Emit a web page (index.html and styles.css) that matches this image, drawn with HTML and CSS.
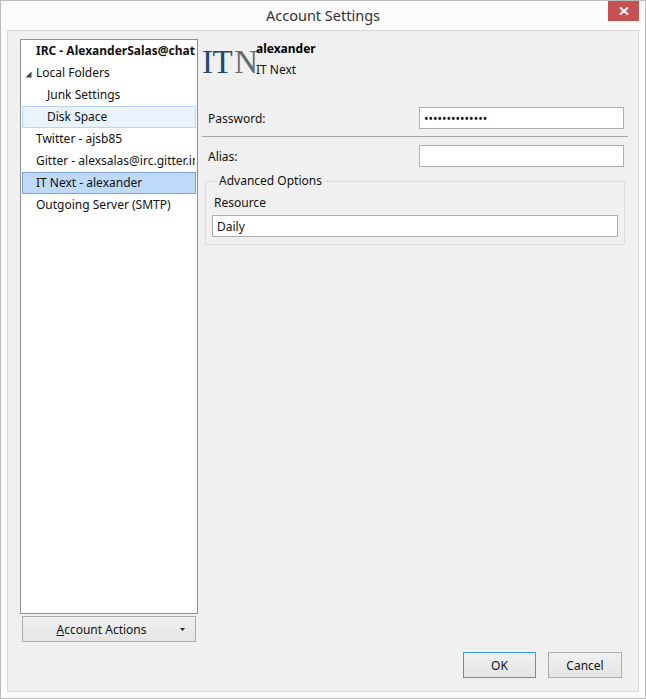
FILE: index.html
```html
<!DOCTYPE html>
<html lang="en">
<head>
<meta charset="utf-8">
<title>Account Settings</title>
<link rel="stylesheet" href="styles.css">
</head>
<body>
<div class="window">
  <header class="titlebar">
    <span></span>
    <h1 class="title">Account Settings</h1>
    <button class="close" type="button" aria-label="Close">
      <svg width="10" height="10" viewBox="0 0 10 10"><path d="M1 1.5 L9 8.5 M9 1.5 L1 8.5" stroke="#fff" stroke-width="2" fill="none"/></svg>
    </button>
  </header>
  <div class="panel">
    <div class="main">
      <aside class="sidebar">
        <ul class="tree">
          <li class="row bold">IRC - AlexanderSalas@chat...</li>
          <li class="row has-arrow"><svg class="arrow" width="7" height="7" viewBox="0 0 7 7"><path d="M6.5 0.5 V6.5 H0.5 Z" fill="#404040"/></svg>Local Folders</li>
          <li class="row child">Junk Settings</li>
          <li class="row child hover">Disk Space</li>
          <li class="row">Twitter - ajsb85</li>
          <li class="row">Gitter - alexsalas@irc.gitter.im</li>
          <li class="row selected">IT Next - alexander</li>
          <li class="row">Outgoing Server (SMTP)</li>
        </ul>
        <button class="btn actions" type="button"><span class="actions-label"><u>A</u>ccount Actions</span><svg class="caret" width="5" height="3" viewBox="0 0 5 3"><path d="M0 0 H5 L2.5 3 Z" fill="#222"/></svg></button>
      </aside>
      <section class="content">
        <div class="head">
          <div class="logo"><span class="logo-it">IT</span><span class="logo-n">N</span></div>
          <div class="head-text">
            <div class="head-name">alexander</div>
            <div class="head-sub">IT Next</div>
          </div>
        </div>
        <div class="field">
          <label class="label" for="pw">Password:</label>
          <input class="input wide" id="pw" type="password" value="aaaaaaaaaaaaaa">
        </div>
        <hr class="sep">
        <div class="field">
          <label class="label" for="alias">Alias:</label>
          <input class="input wide" id="alias" type="text">
        </div>
        <fieldset class="group">
          <legend class="legend">Advanced Options</legend>
          <label class="res-label" for="res">Resource</label>
          <input class="input full" id="res" type="text" value="Daily">
        </fieldset>
      </section>
    </div>
    <footer class="footer">
      <button class="btn default" type="button">OK</button>
      <button class="btn cancel" type="button">Cancel</button>
    </footer>
  </div>
</div>
</body>
</html>
```
FILE: styles.css
```css
* { box-sizing: border-box; }
html, body { margin: 0; padding: 0; }
body {
  width: 646px;
  height: 699px;
  font-family: "Noto Sans", "Open Sans", sans-serif;
  font-size: 12px;
  color: #111;
}
.window {
  width: 646px;
  height: 699px;
  border: 1px solid #bcbcbc;
  background: #fbfbfb;
  display: flex;
  flex-direction: column;
}
.titlebar {
  height: 29px;
  flex: none;
  display: grid;
  grid-template-columns: 1fr auto 1fr;
}
.title {
  margin: 0;
  font-size: 14.5px;
  font-weight: 400;
  line-height: 29px;
  color: #333;
}
.close {
  justify-self: end;
  width: 31px;
  height: 20px;
  margin-right: 6px;
  padding: 0;
  border: 0;
  background: #c75050;
  display: flex;
  align-items: center;
  justify-content: center;
}
.panel {
  flex: 1;
  margin: 0 6px 6px;
  border: 1px solid #d8d8d8;
  background: #f0f0f0;
  display: flex;
  flex-direction: column;
}
.main {
  flex: 1;
  display: flex;
  gap: 4px;
  padding: 8px 0 0 12px;
}
.sidebar {
  width: 178px;
  flex: none;
  display: flex;
  flex-direction: column;
}
.tree {
  flex: 1;
  margin: 0;
  padding: 0;
  list-style: none;
  background: #fff;
  border: 1px solid #8e8f9c;
}
.row {
  height: 22px;
  margin: 0 1px;
  padding-left: 13px;
  line-height: 20px;
  border: 1px solid transparent;
  white-space: nowrap;
  overflow: hidden;
  position: relative;
}
.bold { font-weight: 700; }
.has-arrow .arrow { position: absolute; left: 2px; top: 8px; }
.child { padding-left: 24px; }
.hover { background: #e9f2fd; border-color: #b8d6fb; padding-left: 24px; }
.selected { background: #bfd9fa; border-color: #7da2ce; }
.btn {
  font: inherit;
  color: #111;
  height: 26px;
  padding: 0;
  border: 1px solid #adadad;
  background: linear-gradient(#f0f0f0, #e5e5e5);
}
.actions {
  margin: 2px 2px 0;
  flex: none;
  display: flex;
  align-items: center;
  position: relative;
}
.actions-label { flex: 1; text-align: center; }
.caret { margin-right: 10px; margin-left: 0; }
.content {
  width: 426px;
  flex: none;
}
.head {
  height: 68px;
  display: flex;
  align-items: flex-start;
  gap: 6px;
}
.logo {
  width: 48px;
  margin-top: 5px;
  font-family: "Liberation Serif", serif;
  font-size: 33px;
  line-height: 36px;
  letter-spacing: -0.5px;
  white-space: nowrap;
}
.logo-it { color: #1d4a6e; }
.logo-n { color: #666a6e; margin-left: 2px; }
.head-text { padding-top: 1px; }
.head-name { font-weight: 700; line-height: 18px; color: #000; }
.head-sub { line-height: 18px; margin-top: 3px; }
.field {
  height: 22px;
  display: flex;
  align-items: center;
  padding: 0 4px 0 6px;
}
.label { flex: 1; }
.input {
  height: 22px;
  padding: 0 4px;
  border: 1px solid #abadb3;
  border-radius: 0;
  outline: none;
  background: #fff;
  font: inherit;
  color: #111;
}
.wide { width: 205px; }
.sep {
  height: 0;
  margin: 7px 0 8px;
  border: 0;
  border-top: 1px solid #a8a8a8;
}
.group {
  width: 420px;
  margin: 6px 0 0 3px;
  padding: 5px 6px 7px;
  border: 1px solid #dcdcdc;
}
.legend {
  margin-left: 5px;
  padding: 0 2px;
  line-height: 16px;
}
.res-label {
  display: block;
  margin-left: 2px;
  line-height: 17px;
  margin-bottom: 4px;
}
.full { display: block; width: 406px; }
.footer {
  flex: none;
  display: flex;
  justify-content: flex-end;
  gap: 12px;
  padding: 10px 16px 13px;
}
.default { width: 73px; border-color: #3399ff; }
.cancel { width: 74px; }
```
